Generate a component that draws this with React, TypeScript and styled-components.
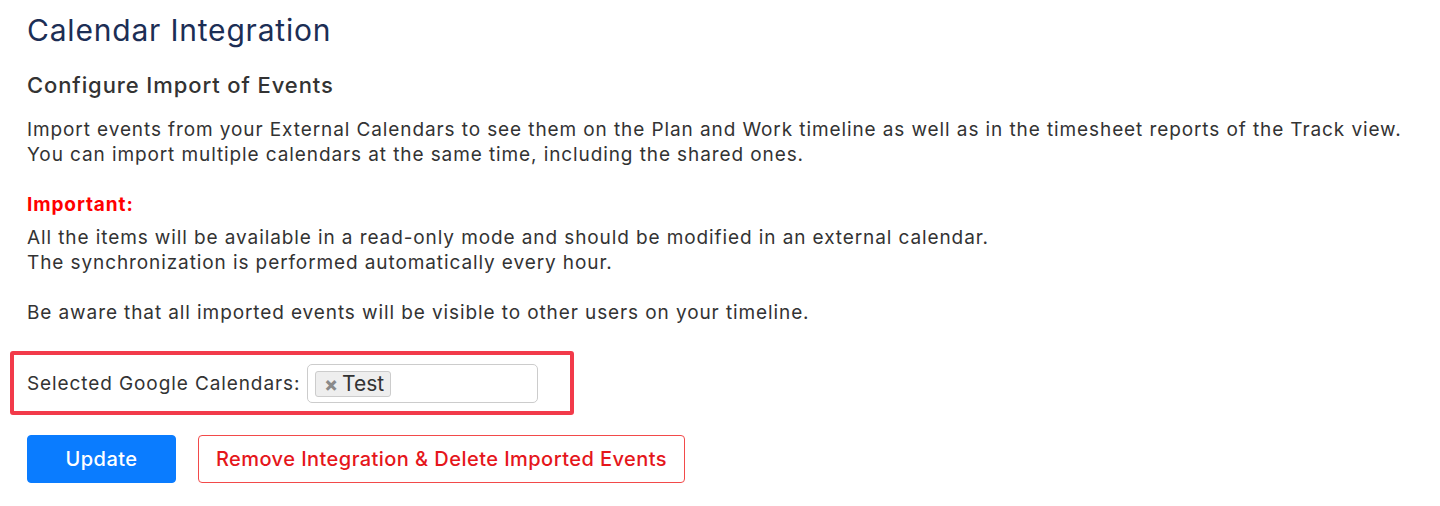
import styled, {createGlobalStyle} from 'styled-components'

const GlobalStyle = createGlobalStyle`
  body {
    margin: 0;
    background: #fff;
    font-family: Inter, "Noto Sans", sans-serif;
    color: #333;
  }
`

const Page = styled.div`
  padding: 10px 27px 0;
`

const Title = styled.h1`
  margin: 0;
  font-size: 30px;
  font-weight: 400;
  letter-spacing: 0.8px;
  color: #1c2e55;
  line-height: 40px;
`

const Subtitle = styled.h2`
  margin: 21px 0 0;
  font-size: 22px;
  font-weight: 500;
  letter-spacing: 0.9px;
  color: #333;
  line-height: 28px;
`

const Paragraph = styled.p<{$gap?: number}>`
  margin: ${p => p.$gap ?? 25}px 0 0;
  font-size: 19px;
  letter-spacing: 0.9px;
  line-height: 25px;
`

const Warning = styled.div`
  margin-top: 25px;
  font-size: 19px;
  letter-spacing: 0.9px;
  line-height: 25px;
  font-weight: 700;
  color: #f00;
`

const SelectRow = styled.div`
  display: flex;
  align-items: center;
  gap: 7px;
  margin: 26px 0 0 -17px;
  width: 564px;
  height: 64px;
  padding: 0 0 0 13px;
  border: 4px solid #f23a4a;
  border-radius: 3px;
  box-sizing: border-box;
`

const Label = styled.span`
  font-size: 19px;
  letter-spacing: 0.9px;
`

const SelectBox = styled.div`
  display: flex;
  align-items: center;
  width: 231px;
  height: 39px;
  padding: 1px 7px 0;
  box-sizing: border-box;
  border: 1px solid #ccc;
  border-radius: 5px;
`

const Tag = styled.span`
  display: inline-flex;
  align-items: center;
  gap: 4px;
  height: 26px;
  padding: 0 6px 0 8px;
  box-sizing: border-box;
  background: #eee;
  border: 1px solid #ccc;
  border-radius: 3px;
  font-size: 21px;
  color: #333;
`

const TagClose = styled.span`
  font-size: 20px;
  font-weight: 800;
  color: #8a8a8a;
  line-height: 1;
`

const Actions = styled.div`
  display: flex;
  gap: 22px;
  margin-top: 20px;
`

const Button = styled.button<{$danger?: boolean}>`
  height: 48px;
  padding: 0;
  font-family: Inter, sans-serif;
  font-size: 20px;
  font-weight: 500;
  letter-spacing: 0.45px;
  white-space: nowrap;
  border-radius: 4px;
  cursor: pointer;
  border: 1px solid ${p => (p.$danger ? '#f24a4a' : '#0a7cff')};
  background: ${p => (p.$danger ? '#fff' : '#0a7cff')};
  color: ${p => (p.$danger ? '#e5161b' : '#fff')};
  width: ${p => (p.$danger ? '487px' : '149px')};
`

export default function App() {
  return (
    <Page>
      <GlobalStyle />
      <Title>Calendar Integration</Title>
      <Subtitle>Configure Import of Events</Subtitle>
      <Paragraph $gap={18}>
        Import events from your External Calendars to see them on the Plan and Work timeline as well as in the
        timesheet reports of the Track view.
        <br />
        You can import multiple calendars at the same time, including the shared ones.
      </Paragraph>
      <Warning>Important:</Warning>
      <Paragraph $gap={8}>
        All the items will be available in a read-only mode and should be modified in an external calendar.
        <br />
        The synchronization is performed automatically every hour.
      </Paragraph>
      <Paragraph>Be aware that all imported events will be visible to other users on your timeline.</Paragraph>
      <SelectRow>
        <Label>Selected Google Calendars:</Label>
        <SelectBox>
          <Tag>
            <TagClose>×</TagClose>Test
          </Tag>
        </SelectBox>
      </SelectRow>
      <Actions>
        <Button>Update</Button>
        <Button $danger>Remove Integration &amp; Delete Imported Events</Button>
      </Actions>
    </Page>
  )
}
